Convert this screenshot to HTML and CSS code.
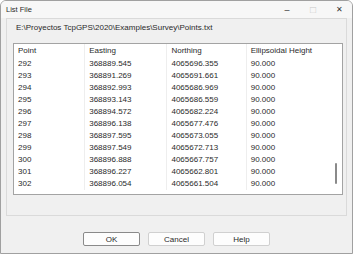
FILE: index.html
```html
<!DOCTYPE html>
<html lang="en">
<head>
    <meta charset="UTF-8">
    <title>List File</title>
    <link rel="stylesheet" href="styles.css">
</head>
<body>
    <div class="window">
        <div class="titlebar">
            <span class="title">List File</span>
            <span class="controls">
                <span class="ctl min">&#8211;</span>
                <span class="ctl max">&#9633;</span>
                <span class="ctl close">&#10005;</span>
            </span>
        </div>

        <div class="panel">
            <div class="path">E:\Proyectos TcpGPS\2020\Examples\Survey\Points.txt</div>
            <div class="listbox">
                <table>
                    <thead>
                        <tr>
                            <th class="c1">Point</th>
                            <th class="c2">Easting</th>
                            <th class="c3">Northing</th>
                            <th class="c4">Ellipsoidal Height</th>
                        </tr>
                    </thead>
                    <tbody>
                        <tr><td>292</td><td>368889.545</td><td>4065696.355</td><td>90.000</td></tr>
                        <tr><td>293</td><td>368891.269</td><td>4065691.661</td><td>90.000</td></tr>
                        <tr><td>294</td><td>368892.993</td><td>4065686.969</td><td>90.000</td></tr>
                        <tr><td>295</td><td>368893.143</td><td>4065686.559</td><td>90.000</td></tr>
                        <tr><td>296</td><td>368894.572</td><td>4065682.224</td><td>90.000</td></tr>
                        <tr><td>297</td><td>368896.138</td><td>4065677.476</td><td>90.000</td></tr>
                        <tr><td>298</td><td>368897.595</td><td>4065673.055</td><td>90.000</td></tr>
                        <tr><td>299</td><td>368897.549</td><td>4065672.713</td><td>90.000</td></tr>
                        <tr><td>300</td><td>368896.888</td><td>4065667.757</td><td>90.000</td></tr>
                        <tr><td>301</td><td>368896.227</td><td>4065662.801</td><td>90.000</td></tr>
                        <tr><td>302</td><td>368896.054</td><td>4065661.504</td><td>90.000</td></tr>
                    </tbody>
                </table>
                <div class="scrollbar"><div class="thumb"></div></div>
            </div>
        </div>

        <div class="buttons">
            <button class="default">OK</button>
            <button>Cancel</button>
            <button>Help</button>
        </div>
    </div>
</body>
</html>
```

FILE: styles.css
```css
html, body {
    margin: 0;
    padding: 0;
    background-color: #ffffff;
}
.window {
    width: 353px;
    height: 254px;
    box-sizing: border-box;
    border: 1px solid #a0a0a0;
    border-radius: 6px 6px 0 0;
    background-color: #f0f0f0;
    font-family: "Liberation Sans", Arial, sans-serif;
    font-size: 8px;
    color: #2a2a2a;
    overflow: hidden;
}
.titlebar {
    height: 17px;
    display: flex;
    align-items: center;
    justify-content: space-between;
    padding-left: 5px;
    background-color: #f7f7f7;
}
.title {
    font-size: 7.5px;
}
.controls {
    display: flex;
    height: 100%;
}
.ctl {
    width: 26px;
    display: flex;
    align-items: center;
    justify-content: center;
    font-size: 9px;
    color: #333;
}
.ctl.max {
    color: #c8c8c8;
    font-size: 10px;
}
.ctl.close {
    font-size: 8px;
}
.panel {
    margin: 0 5px;
    height: 198px;
    box-sizing: border-box;
    border: 1px solid #dadada;
    padding: 3px 3px 0 6px;
}
.path {
    height: 21px;
    line-height: 12px;
    padding-left: 3px;
}
.listbox {
    position: relative;
    height: 152px;
    box-sizing: border-box;
    border: 1px solid #a3a3a3;
    background-color: #ffffff;
}
table {
    border-collapse: collapse;
    table-layout: fixed;
    width: 312px;
}
th, td {
    text-align: left;
    font-weight: normal;
    padding: 0 0 0 4px;
    white-space: nowrap;
    border-left: 1px solid #eeeeee;
}
th:first-child, td:first-child {
    border-left: none;
}
th {
    height: 14px;
    line-height: 14px;
}
td {
    height: 12px;
    line-height: 12px;
}
.c1 { width: 66px; }
.c2 { width: 77px; }
.c3 { width: 74px; }
.c4 { width: 75px; }
.scrollbar {
    position: absolute;
    top: 0;
    right: 0;
    width: 12px;
    bottom: 0;
}
.thumb {
    position: absolute;
    left: 5px;
    top: 119px;
    width: 2px;
    height: 21px;
    border-radius: 1px;
    background-color: #8a8a8a;
}
.buttons {
    display: flex;
    justify-content: center;
    gap: 8px;
    padding-top: 16px;
}
button {
    width: 57px;
    height: 14px;
    padding: 0;
    font-family: "Liberation Sans", Arial, sans-serif;
    font-size: 8px;
    color: #2a2a2a;
    background-color: #fdfdfd;
    border: 1px solid #d0d0d0;
    border-radius: 2px;
}
button.default {
    border-color: #8a8a8a;
}
```
